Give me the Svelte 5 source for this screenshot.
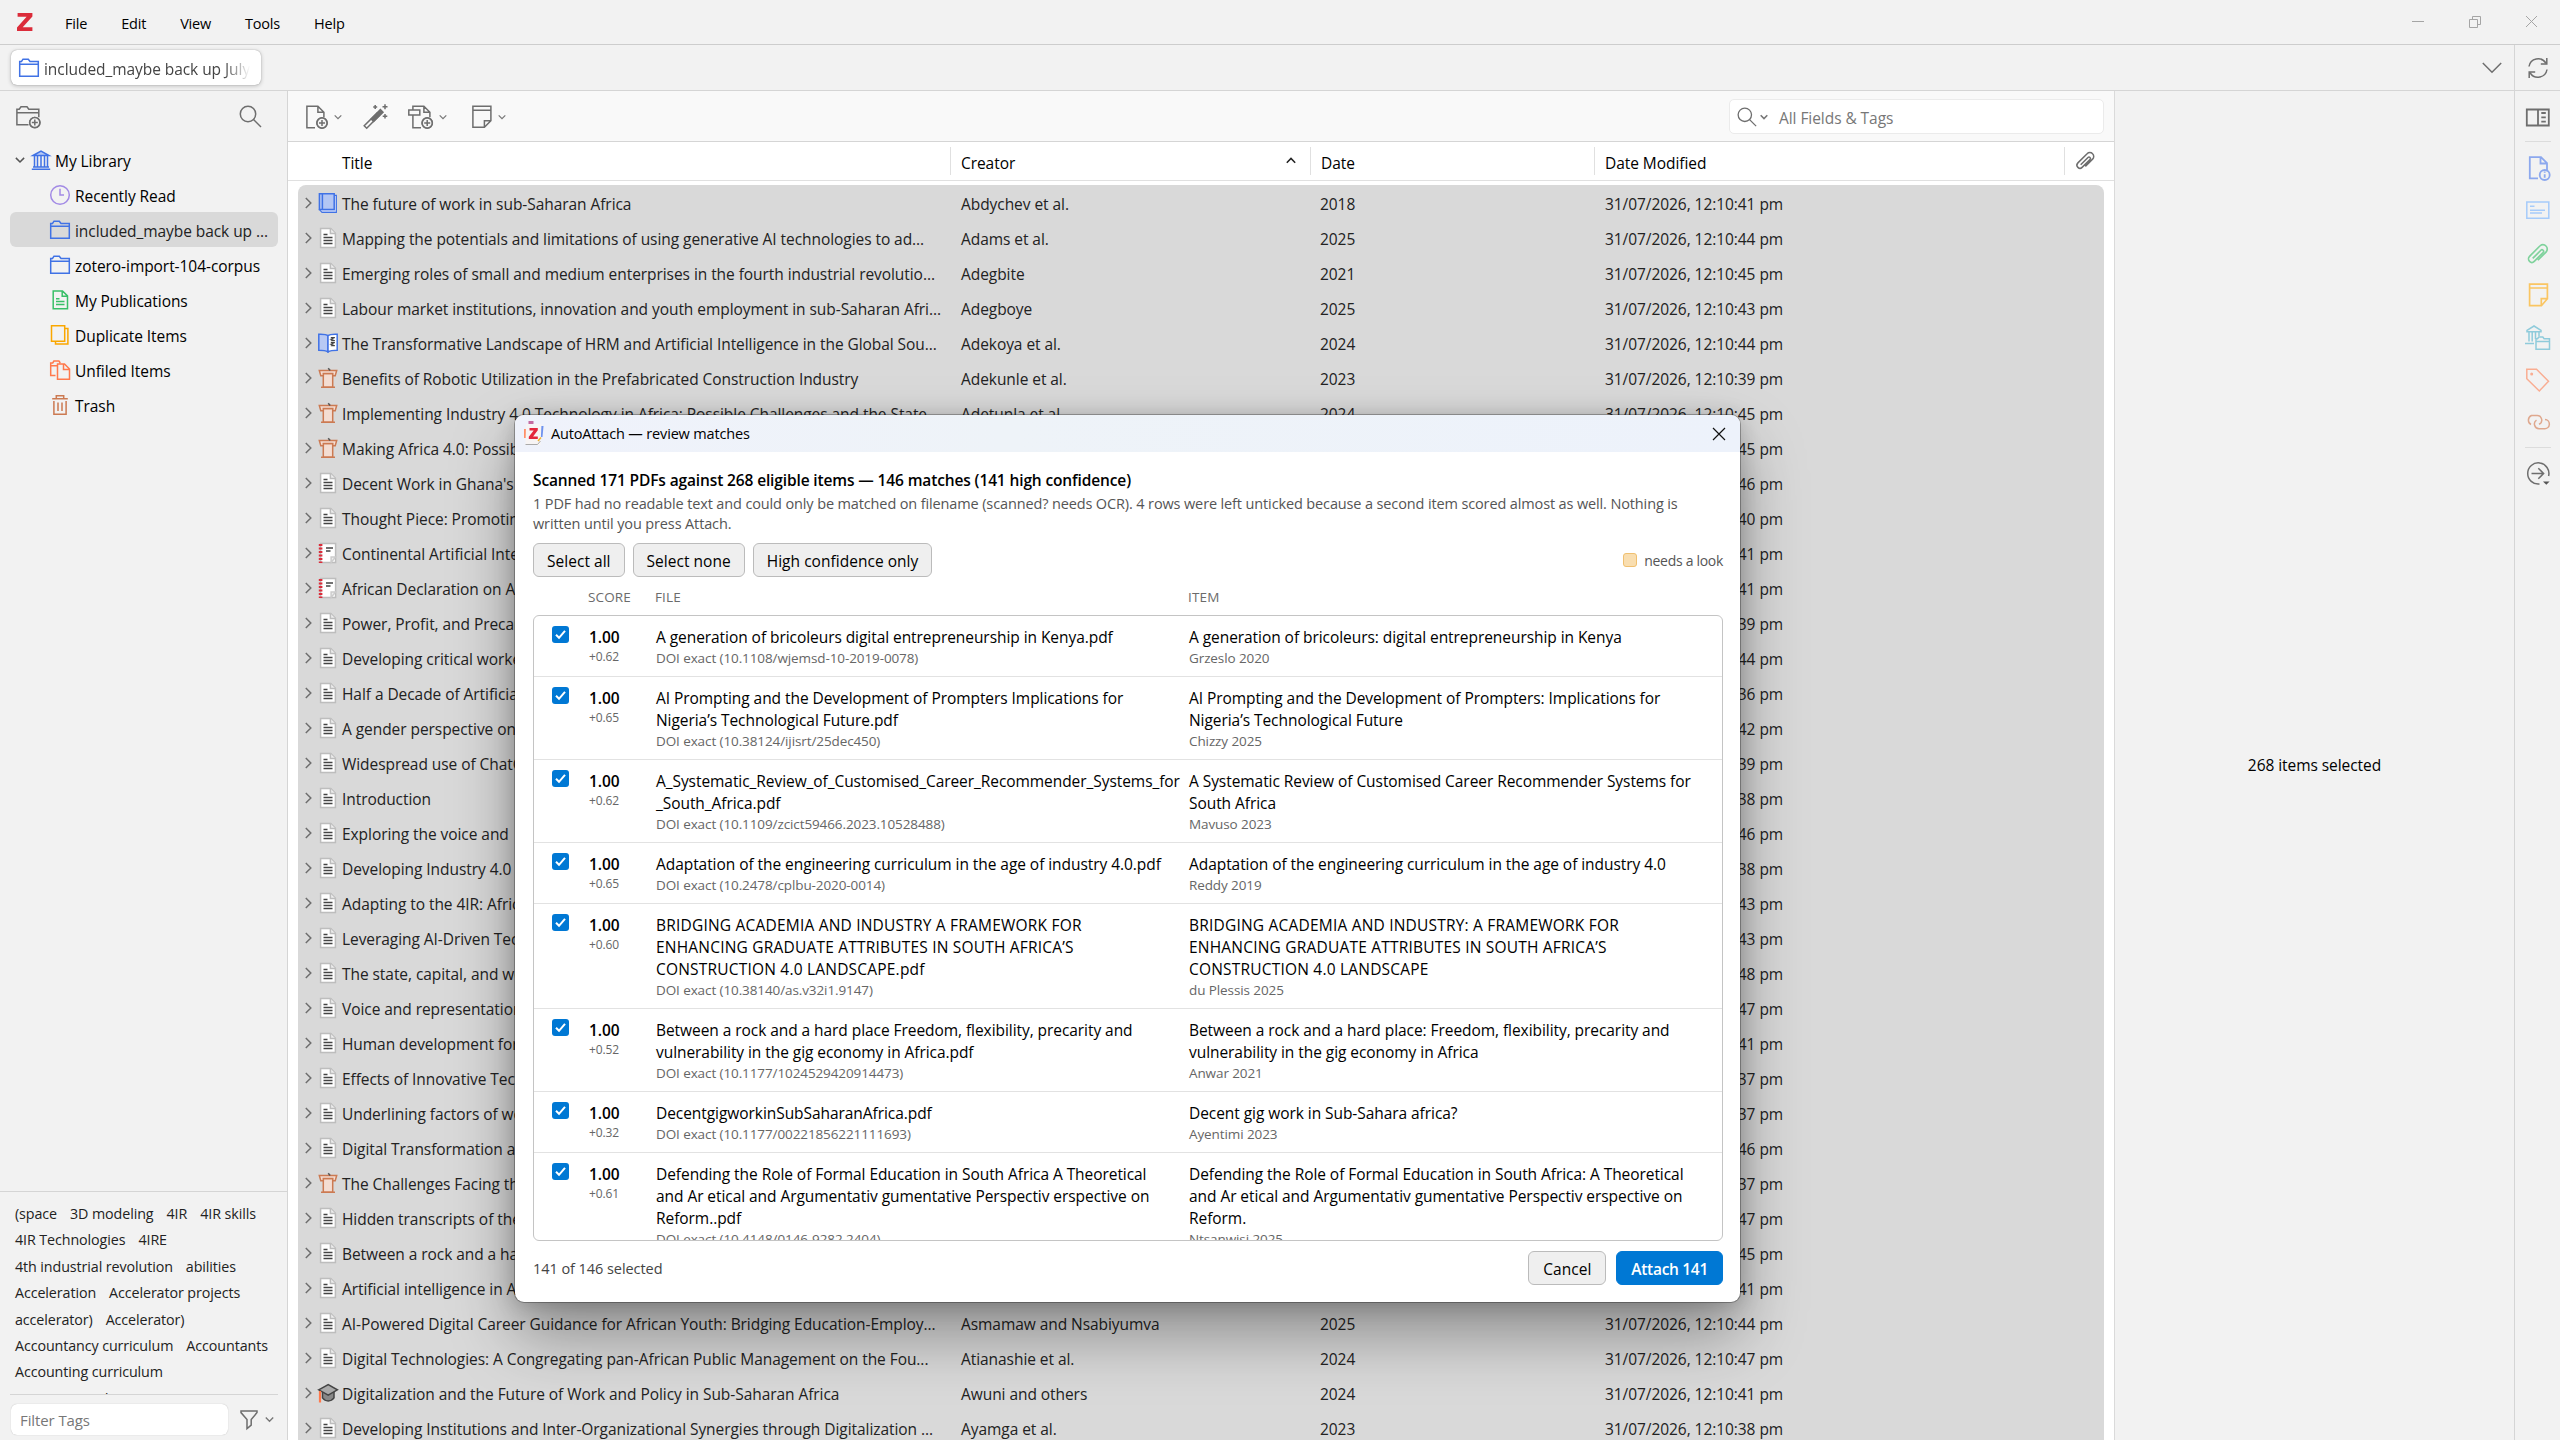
<script>
  const menus = ["File", "Edit", "View", "Tools", "Help"];

  const collections = [
    { icon: "recent", label: "Recently Read" },
    { icon: "folder", label: "included_maybe back up ...", selected: true },
    { icon: "folder", label: "zotero-import-104-corpus" },
    { icon: "publications", label: "My Publications" },
    { icon: "duplicates", label: "Duplicate Items" },
    { icon: "unfiled", label: "Unfiled Items" },
    { icon: "trash", label: "Trash" },
  ];

  const tagRows = [
    ["(space", "3D modeling", "4IR", "4IR skills"],
    ["4IR Technologies", "4IRE"],
    ["4th industrial revolution", "abilities"],
    ["Acceleration", "Accelerator projects"],
    ["accelerator)", "Accelerator)"],
    ["Accountancy curriculum", "Accountants"],
    ["Accounting curriculum"],
    ["Accounting education", "Accuracy"],
  ];

  // [type, title, creator, year, seconds]
  const items = [
    ["book", "The future of work in sub-Saharan Africa", "Abdychev et al.", "2018", "41"],
    ["article", "Mapping the potentials and limitations of using generative AI technologies to ad...", "Adams et al.", "2025", "44"],
    ["article", "Emerging roles of small and medium enterprises in the fourth industrial revolutio...", "Adegbite", "2021", "45"],
    ["article", "Labour market institutions, innovation and youth employment in sub-Saharan Afri...", "Adegboye", "2025", "43"],
    ["section", "The Transformative Landscape of HRM and Artificial Intelligence in the Global Sou...", "Adekoya et al.", "2024", "44"],
    ["conference", "Benefits of Robotic Utilization in the Prefabricated Construction Industry", "Adekunle et al.", "2023", "39"],
    ["conference", "Implementing Industry 4.0 Technology in Africa: Possible Challenges and the State...", "Adetunla et al.", "2024", "45"],
    ["conference", "Making Africa 4.0: Possibilities", "", "", "45"],
    ["article", "Decent Work in Ghana's", "", "", "46"],
    ["article", "Thought Piece: Promoting", "", "", "40"],
    ["report", "Continental Artificial Intelligence", "", "", "41"],
    ["report", "African Declaration on AI", "", "", "41"],
    ["article", "Power, Profit, and Precarity", "", "", "39"],
    ["article", "Developing critical workers", "", "", "44"],
    ["article", "Half a Decade of Artificial", "", "", "36"],
    ["article", "A gender perspective on", "", "", "42"],
    ["article", "Widespread use of ChatGPT", "", "", "39"],
    ["article", "Introduction", "", "", "38"],
    ["article", "Exploring the voice and", "", "", "46"],
    ["article", "Developing Industry 4.0", "", "", "38"],
    ["article", "Adapting to the 4IR: Africa", "", "", "43"],
    ["article", "Leveraging AI-Driven Tech", "", "", "43"],
    ["article", "The state, capital, and work", "", "", "48"],
    ["article", "Voice and representation", "", "", "47"],
    ["article", "Human development for", "", "", "41"],
    ["article", "Effects of Innovative Tech", "", "", "37"],
    ["article", "Underlining factors of work", "", "", "37"],
    ["article", "Digital Transformation and", "", "", "46"],
    ["conference", "The Challenges Facing the", "", "", "37"],
    ["article", "Hidden transcripts of the", "", "", "47"],
    ["article", "Between a rock and a hard", "", "", "45"],
    ["article", "Artificial intelligence in Africa", "", "", "41"],
    ["article", "AI-Powered Digital Career Guidance for African Youth: Bridging Education-Employ...", "Asmamaw and Nsabiyumva", "2025", "44"],
    ["article", "Digital Technologies: A Congregating pan-African Public Management on the Fou...", "Atianashie et al.", "2024", "47"],
    ["thesis", "Digitalization and the Future of Work and Policy in Sub-Saharan Africa", "Awuni and others", "2024", "41"],
    ["article", "Developing Institutions and Inter-Organizational Synergies through Digitalization ...", "Ayamga et al.", "2023", "38"],
  ];

  let matches = $state([
    {
      on: true,
      margin: "+0.62",
      file: "A generation of bricoleurs digital entrepreneurship in Kenya.pdf",
      doi: "10.1108/wjemsd-10-2019-0078",
      item: "A generation of bricoleurs: digital entrepreneurship in Kenya",
      by: "Grzeslo 2020",
    },
    {
      on: true,
      margin: "+0.65",
      file: "AI Prompting and the Development of Prompters Implications for\nNigeria’s Technological Future.pdf",
      doi: "10.38124/ijisrt/25dec450",
      item: "AI Prompting and the Development of Prompters: Implications for\nNigeria’s Technological Future",
      by: "Chizzy 2025",
    },
    {
      on: true,
      margin: "+0.62",
      file: "A_Systematic_Review_of_Customised_Career_Recommender_Systems_for\n_South_Africa.pdf",
      doi: "10.1109/zcict59466.2023.10528488",
      item: "A Systematic Review of Customised Career Recommender Systems for\nSouth Africa",
      by: "Mavuso 2023",
    },
    {
      on: true,
      margin: "+0.65",
      file: "Adaptation of the engineering curriculum in the age of industry 4.0.pdf",
      doi: "10.2478/cplbu-2020-0014",
      item: "Adaptation of the engineering curriculum in the age of industry 4.0",
      by: "Reddy 2019",
    },
    {
      on: true,
      caps: true,
      margin: "+0.60",
      file: "BRIDGING ACADEMIA AND INDUSTRY A FRAMEWORK FOR\nENHANCING GRADUATE ATTRIBUTES IN SOUTH AFRICA’S\nCONSTRUCTION 4.0 LANDSCAPE.pdf",
      doi: "10.38140/as.v32i1.9147",
      item: "BRIDGING ACADEMIA AND INDUSTRY: A FRAMEWORK FOR\nENHANCING GRADUATE ATTRIBUTES IN SOUTH AFRICA’S\nCONSTRUCTION 4.0 LANDSCAPE",
      by: "du Plessis 2025",
    },
    {
      on: true,
      margin: "+0.52",
      file: "Between a rock and a hard place Freedom, flexibility, precarity and\nvulnerability in the gig economy in Africa.pdf",
      doi: "10.1177/1024529420914473",
      item: "Between a rock and a hard place: Freedom, flexibility, precarity and\nvulnerability in the gig economy in Africa",
      by: "Anwar 2021",
    },
    {
      on: true,
      margin: "+0.32",
      file: "DecentgigworkinSubSaharanAfrica.pdf",
      doi: "10.1177/00221856221111693",
      item: "Decent gig work in Sub-Sahara africa?",
      by: "Ayentimi 2023",
    },
    {
      on: true,
      margin: "+0.61",
      file: "Defending the Role of Formal Education in South Africa A Theoretical\nand Ar etical and Argumentativ gumentative Perspectiv erspective on\nReform..pdf",
      doi: "10.4148/0146-9282.2404",
      item: "Defending the Role of Formal Education in South Africa: A Theoretical\nand Ar etical and Argumentativ gumentative Perspectiv erspective on\nReform.",
      by: "Ntsanwisi 2025",
    },
  ]);

  const selectAll = (value) => {
    matches.forEach((m) => (m.on = value));
  };
</script>

{#snippet plus(cx, cy)}
  <circle {cx} {cy} r="5" fill="#f5f5f5" />
  <path d="M{cx - 3} {cy}h6M{cx} {cy - 3}v6" />
{/snippet}

{#snippet chevron(w = 7)}
  <svg class="chev" width={w} height={w} viewBox="0 0 8 8"><path d="M.7 2.3 4 5.6l3.3-3.3" /></svg>
{/snippet}

{#snippet magnifier()}
  <svg class="line" width="23" height="23" viewBox="0 0 23 23">
    <circle cx="9" cy="9" r="7.7" /><path d="m14.5 14.5 7.5 7.5" />
  </svg>
{/snippet}

{#snippet clip(size)}
  <svg class="line" width={size} height={size} viewBox="0 0 20 20">
    <path
      d="M5.7 13.8 13 6.5a1.4 1.4 0 0 1 2 2l-7.9 7.9a3 3 0 0 1-4.2 0 3.2 3.2 0 0 1 0-4.5l9.2-9.2a3.8 3.8 0 0 1 5.5 0 3.8 3.8 0 0 1 0 5.4l-7.3 7.3"
    />
  </svg>
{/snippet}

{#snippet treeIcon(name)}
  <svg class="line" width="20" height="20" viewBox="0 0 20 20">
    {#if name === "library"}
      <g stroke="#4072e5">
        <path d="M2 5.5 10 1l8 4.5z" fill="#b5c8f5" />
        <path d="M3.5 6v10.5M6.5 6v10.5M10 6v10.5M13.5 6v10.5M16.5 6v10.5M2 17h16M.8 19.2h18.4" />
      </g>
    {:else if name === "recent"}
      <g stroke="#a28ae5"><circle cx="10" cy="10" r="9.3" /><path d="M10 3.8V10h4" /></g>
    {:else if name === "folder"}
      <path
        stroke="#4072e5"
        d="M.7 18.2V3.4h1.8L4 1.2h5.3L11 3.4h8.3v14.8zM.7 6.2h18.6"
      />
    {:else if name === "publications"}
      <path
        stroke="#39bf68"
        d="M3.2.9h9.3l5 5v12.8H3.2zM12.2.9v5.3h5.3M6 8.7h3.5M6 11.6h8.5M6 14.5h8.5"
      />
    {:else if name === "duplicates"}
      <path stroke="#faa700" d="M1.5.8h13.2v15.4H1.5zM14.7 3.6h3.2v15.5H5.5v-2.9" />
    {:else if name === "unfiled"}
      <path
        stroke="#ff794c"
        d="M5.5 15.4H.7V3h2l1.2-2h5l1.4 2M.7 5.7h6.5M7.5 4h7l5 5v10.3H7.5zM13.5 4v5.5h6"
      />
    {:else}
      <path stroke="#cc7a52" d="M2.2 3.7h15.6M6.3 3.5V.8h7.4v2.7M3.9 6v13.2h12.2V6M8 7.5v8.6M12 7.5v8.6" />
    {/if}
  </svg>
{/snippet}

{#snippet itemIcon(type)}
  <svg class="line" width="20" height="20" viewBox="0 0 20 20">
    {#if type === "article"}
      <path d="M2.6.6h10.2l4.6 4.6v14.2H2.6z" fill="#fff" stroke="#bdbdbd" />
      <path d="M12.4.6v5h5" fill="#ededed" stroke="#bdbdbd" />
      <path d="M5.5 6.5h4M5.5 9.6h9M5.5 12.6h9M5.5 15.6h9" stroke="#444" />
    {:else if type === "book"}
      <path d="M16.2 2.4h2.2v17H4l-2.6-2.8z" fill="#c9d6f7" stroke="#4072e5" stroke-width="1.1" />
      <path d="M1.4.8h14.8v15.8H1.4zM4.4.8v15.8" fill="#b3c6f4" stroke="#4072e5" />
    {:else if type === "section"}
      <path d="M.8 1.2C4 1.2 8 .9 10 2.6v16.2c-3-1.5-6-1.5-9.2-1.5z" fill="#b8c9f4" stroke="#4072e5" />
      <path d="M10 2.6c2-1.7 5-1.4 9.2-1.4v16.1c-3.2 0-6.2 0-9.2 1.5z" fill="#fff" stroke="#4072e5" />
      <path d="M12.8 4.5h4l-4 1.7 4 1.6h-4M12.8 9.5h4l-4 1.7 4 1.6h-4" stroke="#444" stroke-width="1.1" />
    {:else if type === "conference"}
      <path d="M5.3 5.5h9.4v13.7H5.3z" fill="#f4ddd2" stroke="#cc7a52" />
      <path
        d="M1.3 2.5h17.4l-1.5 5.3h-2.4V5.5H5.3v2.3H2.8zM3 19.2h14"
        fill="#f4ddd2"
        stroke="#cc7a52"
      />
      <path d="m10.2.2 2 2.3" stroke="#555" />
    {:else if type === "report"}
      <path d="M2.6.6h15v18.8h-15z" fill="#fff" stroke="#bdbdbd" />
      <path d="M17.6 14h-4.5v5.4z" fill="#eee" stroke="#ccc" />
      <path d="M8 5h7M8 8h4.5" stroke="#444" />
      <path d="M2.6 1v19" stroke="#db2c3a" stroke-width="3.6" stroke-dasharray="2 1.5" />
    {:else}
      <path d="M4.5 8.5v6.4c3 4 8.5 4 11.5 0V8.5z" fill="#888" stroke="#444" />
      <path d="M.7 6.8 10.2 1.5l9.2 5.3-9.2 5.4z" fill="#aaa" stroke="#444" />
      <path d="M2 8v11.5" stroke="#ff794c" stroke-width="2.2" />
    {/if}
  </svg>
{/snippet}

<div class="app">
  <header class="menubar">
    <svg class="logo" width="16" height="18" viewBox="0 0 16 18">
      <path fill="#db2c3a" d="M.6 0h14.8v3.4L5.7 14.2h9.7V18H0v-3.5L9.6 3.8H.6z" />
    </svg>
    <nav>
      {#each menus as menu}<span>{menu}</span>{/each}
    </nav>
    <svg class="winbtns" width="128" height="16" viewBox="0 0 128 16">
      <path
        d="M1 7.5h12M58.5 5.5h8v8h-8zM61.5 5.5v-3h8v8h-3M115 2l11 11M126 2l-11 11"
      />
    </svg>
  </header>

  <div class="tabbar">
    <div class="tab">
      {@render treeIcon("folder")}
      <span>included_maybe back up July</span>
    </div>
    <svg class="line tabs-menu" width="20" height="12" viewBox="0 0 20 12"><path d="m.8 1 9.2 9.2L19.2 1" /></svg>
    <div class="sync">
      <svg class="line" width="22" height="22" viewBox="0 0 22 22">
        <path d="M2 9.5A9.2 9.2 0 0 1 18.8 6M19.8 1v6h-6M20 12.5A9.2 9.2 0 0 1 3.2 16M2.2 21v-6h6" />
      </svg>
    </div>
  </div>

  <div class="body">
    <aside class="left">
      <div class="left-tools">
        <svg class="line" width="25" height="24" viewBox="0 0 25 24">
          <path d="M12.5 19.8H.9V4.2h2.3L5 1.7h6l1.8 2.5h10v8M.9 7.8h22" />
          <circle cx="18.8" cy="17.6" r="5.2" />
          {@render plus(18.8, 17.6)}
        </svg>
        {@render magnifier()}
      </div>

      <div class="tree">
        <div class="node root">{@render chevron(10)}{@render treeIcon("library")}<span>My Library</span></div>
        {#each collections as c}
          <div class="node" class:selected={c.selected}>{@render treeIcon(c.icon)}<span>{c.label}</span></div>
        {/each}
      </div>

      <div class="tags">
        <div class="tag-list">
          {#each tagRows as row}
            <div class="tag-row">{#each row as tag}<span>{tag}</span>{/each}</div>
          {/each}
        </div>
        <div class="tag-filter">
          <div class="filter-input">Filter Tags</div>
          <svg class="line" width="18" height="20" viewBox="0 0 18 20"><path d="M1 1h16v1.6l-5.8 7v5.6l-4.2 3.4v-9L1 2.6z" /></svg>
          {@render chevron(9)}
        </div>
      </div>
    </aside>

    <main>
      <div class="toolbar">
        <svg class="line" width="22" height="24" viewBox="0 0 22 24">
          <path d="M9 22.8H.9V1.2h11l6 6v5M11.9 1.2v6h6" />
          <circle cx="16" cy="18" r="5.2" />
          {@render plus(16, 18)}
        </svg>
        {@render chevron(8)}
        <svg class="line wand" width="25" height="25" viewBox="0 0 25 25">
          <path d="m1.2 21.8 12.5-12.4 2.4 2.4L3.7 24.2z" />
          <path d="m14.2 8.8 3.2-3.2 2.6 2.6-3.2 3.2zM8.2 15l6-6 2.4 2.4-6 6z" fill="#6e6e6e" />
          <path d="M12.2 1v4M10.2 3h4M22 .2v5M19.5 2.7h5M22 10v4.6M19.7 12.3h4.6" />
        </svg>
        <svg class="line attach" width="25" height="24" viewBox="0 0 25 24">
          <path d="M13 22.8H4.9V10M4.9 5V1.2h11l6 6v5M15.9 1.2v6h6M.8 5h11v5H.8z" />
          <circle cx="19.2" cy="18" r="5.2" />
          {@render plus(19.2, 18)}
        </svg>
        {@render chevron(8)}
        <svg class="line note" width="20" height="24" viewBox="0 0 20 24">
          <path d="M.9 1.2h18v14.6l-6.5 6.5H.9zM.9 5.2h18M12.4 22v-6.3h6.3" />
        </svg>
        {@render chevron(8)}
        <div class="search">
          {@render magnifier()}
          {@render chevron(8)}
          <span>All Fields &amp; Tags</span>
        </div>
      </div>

      <div class="grid head">
        <span class="c-title">Title</span>
        <span class="sep">Creator
          <svg class="line" width="10" height="7" viewBox="0 0 10 7"><path d="M.8 5.8 5 1.4l4.2 4.4" stroke="#222" /></svg>
        </span>
        <span class="sep">Date</span>
        <span class="sep">Date Modified</span>
        <span class="sep clip">{@render clip(20)}</span>
      </div>

      <div class="items">
        {#each items as [type, title, creator, year, sec]}
          <div class="grid item">
            <span class="c-title">
              <svg class="line twisty" width="7" height="12" viewBox="0 0 7 12"><path d="m.8 1 5 5-5 5" /></svg>
              {@render itemIcon(type)}
              <b>{title}</b>
            </span>
            <span>{creator}</span>
            <span>{year}</span>
            <span>31/07/2026, 12:10:{sec} pm</span>
          </div>
        {/each}
      </div>
    </main>

    <section class="pane">268 items selected</section>

    <aside class="sidenav">
      <svg class="line" width="26" height="380" viewBox="0 0 26 380">
        <path d="M1.8 4.5h22v16h-22zM13 4.5v16M16.3 8h4.5M16.3 12.3h4.5M16.3 16.6h4.5" stroke-width="1.8" />
        <path d="M0 36.5h26M0 342.5h26" stroke="#dcdcdc" stroke-width="1" />
        <g stroke="#8ca8ee" stroke-width="1.8">
          <path d="M13 73.3H4.8V52.2H16l6 6v8M15.5 52.2v6.3H22" />
          <circle cx="19.7" cy="70" r="5" /><path d="M19.7 69.2v3.6M19.7 66.5v1.3" />
        </g>
        <path d="M1.8 97h22v16.3h-22zM5 101.3h4.5M5 105.3h15M5 108h12" stroke="#a6cbfa" />
        <g transform="translate(1.3 138) scale(1.12)" stroke="#7fd29c">
          <path
            d="M5.7 13.8 13 6.5a1.4 1.4 0 0 1 2 2l-7.9 7.9a3 3 0 0 1-4.2 0 3.2 3.2 0 0 1 0-4.5l9.2-9.2a3.8 3.8 0 0 1 5.5 0 3.8 3.8 0 0 1 0 5.4l-7.3 7.3"
          />
        </g>
        <path d="M4.6 179.2h17.8v14.5l-6 7H4.6zM4.6 183h17.8M16.3 200.5v-6.8h6" stroke="#fac562" stroke-width="1.7" />
        <g stroke="#8fcbdb" stroke-width="1.5">
          <path d="M2 225.3 9 221l7 4.3v1.5H2zM4 227v9.5M7.2 227v9.5M10.5 227v7M14 227v4M0 238.5h9M11 244.2v-10.5h1.5l1.3-1.7h4l1.3 1.7h5.4v10.5zM11 236.5h14" />
        </g>
        <path d="M1.8 264.2h9.7l12 12-9.2 9.8-12.5-12.2z" stroke="#f9ad92" />
        <circle cx="6.7" cy="269" r="1.5" fill="#f9ad92" stroke="none" />
        <path
          d="M6 319.5a5 5 0 0 1 .5-9h5.500a4.600 4.600 0 0 1 2 8.800M20 314.500a4.600 4.600 0 0 1-.5 9.200H14a4.700 4.700 0 0 1-2.500-8.600"
          stroke="#dfa88e"
        />
        <path d="M14.5 379A10.6 10.6 0 1 1 23.600 371M6.500 368.500h12M13.300 363.200l5.300 5.300-5.300 5.300" />
        <path d="M18 376.500h6.600l-3.300 3.300z" fill="#555" stroke="none" />
      </svg>
    </aside>
  </div>

  <div class="dialog">
    <div class="titlebar">
      <svg width="20" height="25" viewBox="0 0 20 25">
        <path d="M4.5 0h5v5h-5z" fill="#c46ba0" />
        <path d="M0 8h4v9H0z" fill="#ff9068" />
        <path d="M16 5h3.500l-1 11h-2.500z" fill="#6e92ee" />
        <path d="M2 3h15.500l-1 21H1.500z" fill="#f7f4f4" />
        <path d="M1.500 23.500h12l3-3.500" stroke="#aaa" fill="none" />
        <path d="M5.500 7h8.300v2.300l-4.700 6.200h4.700V18h-9v-2.300l4.900-6.200H5.500z" fill="#e3273c" />
        <path d="m14 20 3-3.500" stroke="#f0b030" stroke-width="1.5" />
      </svg>
      <span>AutoAttach — review matches</span>
      <svg class="close" width="14" height="14" viewBox="0 0 14 14"><path d="m1 1 12 12M13 1 1 13" /></svg>
    </div>

    <div class="content">
      <h1>Scanned 171 PDFs against 268 eligible items — 146 matches (141 high confidence)</h1>
      <p>
        1 PDF had no readable text and could only be matched on filename (scanned? needs OCR). 4 rows were left unticked because a second item scored almost as well. Nothing is<br />written until you press Attach.
      </p>
      <div class="actions">
        <button onclick={() => selectAll(true)}>Select all</button>
        <button onclick={() => selectAll(false)}>Select none</button>
        <button>High confidence only</button>
        <span class="legend"><i></i>needs a look</span>
      </div>

      <div class="cols labels"><span></span><span>SCORE</span><span>FILE</span><span>ITEM</span></div>
      <div class="matches">
        {#each matches as m}
          <div class="cols match" class:caps={m.caps}>
            <button class="check" class:on={m.on} aria-label="Toggle" onclick={() => (m.on = !m.on)}>
              {#if m.on}
                <svg width="17" height="17" viewBox="0 0 17 17"><path d="m4 8.800 3 3 6-7" /></svg>
              {/if}
            </button>
            <div class="score"><b>1.00</b><small>{m.margin}</small></div>
            <div class="text">{m.file}<small>DOI exact ({m.doi})</small></div>
            <div class="text">{m.item}<small>{m.by}</small></div>
          </div>
        {/each}
      </div>

      <footer>
        <span>141 of 146 selected</span>
        <button>Cancel</button>
        <button class="primary">Attach 141</button>
      </footer>
    </div>
  </div>
</div>

<style>
  :global(body) {
    margin: 0;
    background: #f2f2f2;
  }

  .app {
    position: relative;
    display: flex;
    flex-direction: column;
    width: 2560px;
    height: 1440px;
    overflow: hidden;
    background: #f2f2f2;
    color: #000;
    font-family: "Open Sans", "Noto Sans", sans-serif;
    font-size: 15.5px;
    letter-spacing: -0.06px;
    white-space: nowrap;
  }
  .app * {
    box-sizing: border-box;
  }
  svg {
    display: block;
    flex: none;
  }
  .line {
    fill: none;
    stroke: #6e6e6e;
    stroke-width: 1.5;
    overflow: visible;
  }
  .chev {
    fill: none;
    stroke: #777;
    stroke-width: 1.2;
  }

  .menubar {
    display: flex;
    align-items: center;
    height: 45px;
    padding: 0 21px 0 17px;
    border-bottom: 1px solid #cdcdcd;
    font-size: 14.5px;
    letter-spacing: -0.2px;
  }
  .menubar nav {
    display: flex;
    gap: 34px;
    padding: 2px 0 0 32px;
  }
  .winbtns {
    margin-left: auto;
    fill: none;
    stroke: #a5a5a5;
  }

  .tabbar {
    display: flex;
    align-items: center;
    height: 46px;
    padding-left: 11px;
    border-bottom: 1px solid #d5d5d5;
  }
  .tab {
    display: flex;
    align-items: center;
    gap: 5px;
    width: 250px;
    height: 35px;
    padding: 0 9px 0 8px;
    border-radius: 6px;
    background: #fff;
    box-shadow: 0 0 1px rgba(0, 0, 0, 0.4), 0 1px 4px rgba(0, 0, 0, 0.22);
    color: #444;
  }
  .tab span {
    overflow: hidden;
    padding-top: 3px;
    mask-image: linear-gradient(to left, transparent, #000 26px);
  }
  .tabs-menu {
    margin-left: auto;
  }
  .sync {
    display: flex;
    align-items: center;
    align-self: stretch;
    width: 46px;
    margin-left: 12px;
    padding-left: 12px;
    border-left: 1px solid #d5d5d5;
  }

  .body {
    display: flex;
    flex: 1;
    min-height: 0;
  }
  .left {
    display: flex;
    flex-direction: column;
    width: 288px;
    border-right: 1px solid #d5d5d5;
  }
  .left-tools {
    display: flex;
    justify-content: space-between;
    padding: 14px 25px 0 16px;
    height: 51px;
  }
  .tree {
    flex: 1;
  }
  .node {
    display: flex;
    align-items: center;
    gap: 5px;
    height: 35px;
    margin: 0 9px 0 10px;
    padding-left: 40px;
    border-radius: 6px;
  }
  .node span {
    padding-top: 3px;
  }
  .node.root {
    padding-left: 5px;
    gap: 4px;
  }
  .root .chev {
    margin-right: 2px;
    stroke: #555;
  }
  .node.selected {
    background: #d9d9d9;
    color: #222;
  }

  .tags {
    height: 249px;
    border-top: 1px solid #d5d5d5;
    font-size: 14.3px;
    letter-spacing: -0.1px;
    color: #222;
  }
  .tag-list {
    height: 203px;
    margin: 0 9px 0 10px;
    padding: 8px 0 0 5px;
    overflow: hidden;
    border-bottom: 1px solid #d5d5d5;
  }
  .tag-row {
    display: flex;
    gap: 13px;
    height: 26.4px;
    line-height: 27px;
  }
  .tag-filter {
    display: flex;
    align-items: center;
    padding: 9px 0 0 11px;
  }
  .filter-input {
    width: 217px;
    height: 31px;
    margin-right: 12px;
    padding-left: 9px;
    border-radius: 6px;
    background: #fff;
    box-shadow: 0 0 1px rgba(0, 0, 0, 0.3);
    color: #777;
    font-size: 15px;
    line-height: 33px;
  }
  .tag-filter .chev {
    margin-left: 7px;
  }

  main {
    display: flex;
    flex-direction: column;
    width: 1827px;
    border-right: 1px solid #dadada;
    background: #fff;
  }
  .toolbar {
    display: flex;
    align-items: center;
    height: 51px;
    padding: 1px 10px 0 18px;
    border-bottom: 1px solid #d5d5d5;
    background: #f9f9f9;
  }
  .toolbar > .chev {
    margin-left: 6px;
  }
  .wand {
    margin-left: 21px;
  }
  .attach {
    margin-left: 20px;
  }
  .note {
    margin-left: 25px;
  }
  .search {
    display: flex;
    align-items: center;
    width: 375px;
    height: 35px;
    margin-left: auto;
    padding-left: 7px;
    border: 1px solid #ebebeb;
    border-radius: 5px;
    background: #fff;
    color: #777;
  }
  .search span {
    padding-top: 2px;
  }
  .search .line {
    width: 20px;
    height: 20px;
  }
  .search .chev {
    margin: 0 11px 0 3px;
    stroke-width: 1.6;
  }

  .grid {
    display: grid;
    grid-template-columns: 662px 360px 284px 470px 50px;
    align-items: center;
  }
  .head {
    height: 39px;
    border-bottom: 1px solid #e0e0e0;
  }
  .head .c-title {
    padding: 3px 0 0 54px;
  }
  .sep {
    display: flex;
    align-items: center;
    justify-content: space-between;
    height: 28px;
    padding: 3px 14px 0 10px;
    border-left: 1px solid #e0e0e0;
  }
  .sep .line {
    margin-top: -4px;
  }
  .items {
    flex: 1;
    min-height: 0;
    margin: 4px 10px 0;
    overflow: hidden;
    border-radius: 8px 8px 0 0;
    background: #d9d9d9;
    color: #222;
  }
  .item {
    grid-template-columns: 663px 359px 285px 1fr;
    height: 35px;
  }
  .item > span {
    padding-top: 3px;
  }
  .item .c-title {
    display: flex;
    align-items: center;
    width: 640px;
    padding: 0 0 0 7px;
  }
  .c-title b {
    padding: 3px 0 0 4px;
    font-weight: 400;
  }
  .twisty {
    margin-right: 6px;
  }

  .pane {
    flex: 1;
    padding-top: 663px;
    text-align: center;
  }
  .sidenav {
    width: 46px;
    padding: 14px 0 0 10px;
    border-left: 1px solid #d5d5d5;
  }

  .dialog {
    position: absolute;
    left: 515px;
    top: 415px;
    display: flex;
    flex-direction: column;
    width: 1225px;
    height: 887px;
    border-radius: 9px;
    background: #fff;
    box-shadow: 0 0 0 1px rgba(0, 0, 0, 0.28), 0 32px 64px rgba(0, 0, 0, 0.36), 0 2px 21px rgba(0, 0, 0, 0.2);
  }
  .titlebar {
    display: flex;
    align-items: center;
    gap: 7px;
    height: 37px;
    padding: 0 14px 0 9px;
    border-radius: 9px 9px 0 0;
    background: linear-gradient(90deg, #eff2fb, #eef3f8 40%, #edf2fb);
    font-size: 14.5px;
    letter-spacing: -0.16px;
  }
  .close {
    margin-left: auto;
    fill: none;
    stroke: #111;
    stroke-width: 1.2;
  }
  .content {
    display: flex;
    flex: 1;
    flex-direction: column;
    padding: 16px 17px 17px 18px;
  }
  h1 {
    margin: 0;
    font-size: 15.5px;
    font-weight: 600;
    letter-spacing: -0.13px;
    line-height: 24px;
  }
  p {
    margin: 2px 0 0;
    color: #555;
    font-size: 14.5px;
    letter-spacing: -0.13px;
    line-height: 20px;
  }
  .actions {
    display: flex;
    gap: 8px;
    margin-top: 9px;
  }
  button {
    height: 34px;
    padding: 2px 13px 0;
    border: 1px solid #bbb;
    border-radius: 6px;
    background: #efefef;
    color: #000;
    font: inherit;
    letter-spacing: 0.03px;
  }
  .legend {
    display: flex;
    align-items: center;
    gap: 7px;
    margin-left: auto;
    color: #555;
    font-size: 14px;
    letter-spacing: -0.3px;
  }
  .legend i {
    width: 14px;
    height: 14px;
    border: 1px solid #f0c070;
    border-radius: 3px;
    background: #f9deb0;
  }

  .cols {
    display: grid;
    grid-template-columns: 37px 67px 533px 1fr;
  }
  .labels {
    height: 38px;
    padding: 10px 18px 0;
    color: #6b6b6b;
    font-size: 13.5px;
    font-weight: 500;
    letter-spacing: 0.15px;
    line-height: 21px;
  }
  .matches {
    height: 626px;
    overflow: hidden;
    border: 1px solid #c4c4c4;
    border-radius: 6px;
  }
  .match {
    padding: 10px 18px 8px;
    border-bottom: 1px solid #e2e2e2;
  }
  .check {
    width: 17px;
    height: 17px;
    padding: 0;
    border-radius: 3px;
  }
  .check.on {
    border: 0;
    background: #0078d4;
  }
  .check path {
    fill: none;
    stroke: #fff;
    stroke-width: 2;
  }
  .text {
    line-height: 22px;
    white-space: pre-line;
  }
  .caps .text {
    letter-spacing: 0.2px;
  }
  small {
    display: block;
    color: #666;
    font-size: 13.5px;
    letter-spacing: -0.1px;
    line-height: 20px;
  }
  .caps small {
    letter-spacing: -0.1px;
  }
  .score b {
    display: block;
    font-weight: 600;
    line-height: 22px;
  }
  .score small {
    font-size: 12px;
    line-height: 18px;
  }

  footer {
    display: flex;
    align-items: center;
    gap: 10px;
    margin-top: 10px;
    color: #444;
    font-size: 14.5px;
  }
  footer span {
    margin-right: auto;
  }
  footer button {
    padding: 2px 14px 0;
    font-size: 15.5px;
  }
  footer .primary {
    border-color: #0078d4;
    background: #0078d4;
    color: #fff;
    font-weight: 600;
    letter-spacing: -0.3px;
  }
</style>
